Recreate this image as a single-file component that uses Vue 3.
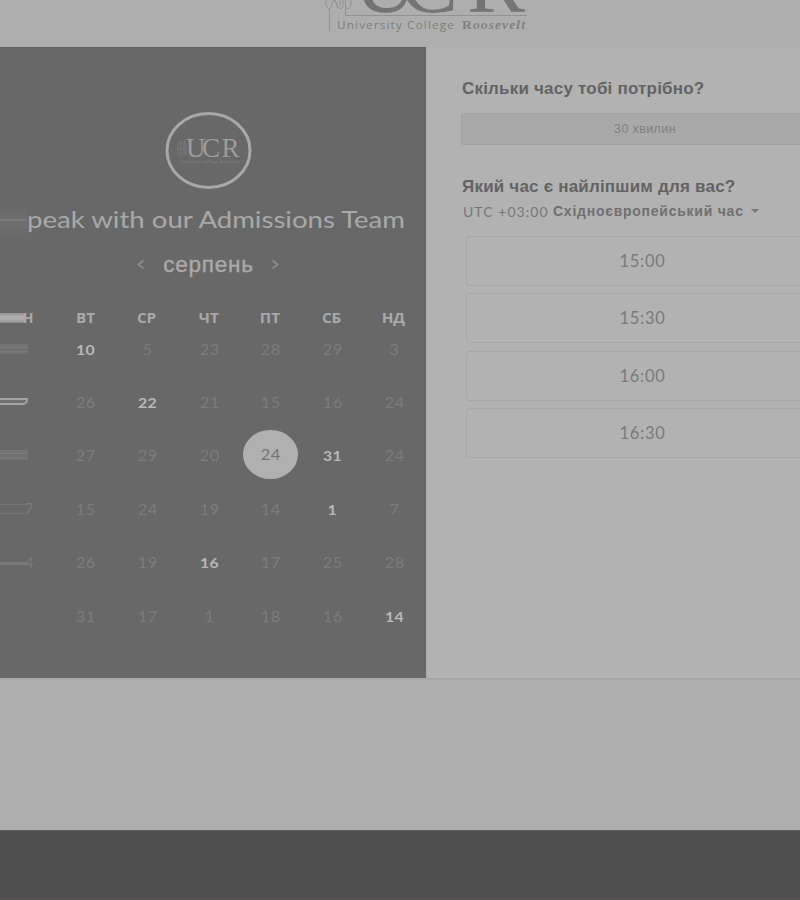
<script setup>
const names = ['ВТ', 'СР', 'ЧТ', 'ПТ', 'СБ', 'НД']
const weeks = [
  { mark: 'double', edge: '', days: [10, 5, 23, 28, 29, 3], open: 0 },
  { mark: 'bright', edge: '', days: [26, 22, 21, 15, 16, 24], open: 1 },
  { mark: 'double', edge: '', days: [27, 29, 20, 24, 31, 24], open: 4, selected: 3 },
  { mark: 'outline', edge: '7', days: [15, 24, 19, 14, 1, 7], open: 4 },
  { mark: 'line', edge: '4', days: [26, 19, 16, 17, 25, 28], open: 2 },
  { mark: 'faint', edge: '', days: [31, 17, 1, 18, 16, 14], open: 5 },
]
const times = ['15:00', '15:30', '16:00', '16:30']
</script>

<template>
  <div class="page">
    <header class="top">
      <svg class="brand" width="210" height="47" viewBox="0 0 210 47">
        <g fill="none" stroke="#929292" stroke-width="1">
          <path d="M9.5 8V31M25.5 0V15.5H207" />
          <path d="M6 0V6L9 9L12 6V2L15 0L18 7L21 9L23 6V0M31 0V6L28 9L26 7M14 0L17 4V8M20 0V5" />
        </g>
        <text class="brand-big" x="34 80 147" y="12">UCR</text>
        <text class="brand-sub" x="17" y="28.5" textLength="118" lengthAdjust="spacingAndGlyphs">University College</text>
        <text class="brand-name" x="142" y="28.5" textLength="64" lengthAdjust="spacingAndGlyphs"><tspan class="cap">R</tspan>oosevelt</text>
      </svg>
    </header>

    <main class="widget">
      <section class="calendar">
        <svg class="seal" width="88" height="80" viewBox="0 0 88 80">
          <ellipse cx="44.5" cy="40.5" rx="41.5" ry="37" fill="none" stroke="#a8a8a8" stroke-width="3" />
          <path d="M14 45V36L17 31V45M20 45V31L22 35V45M14 39H23M17 47V43" fill="none" stroke="#787878" />
          <text class="seal-big" x="22 38 57.5" y="47">UCR</text>
          <text class="seal-sub" x="16" y="52.5" textLength="59">University College Roosevelt</text>
        </svg>

        <div class="title-row">
          <span class="title-mark"></span>
          <svg class="title" width="382" height="34" viewBox="0 0 382 34">
            <text x="0" y="24" textLength="378" lengthAdjust="spacingAndGlyphs">peak with our Admissions Team</text>
          </svg>
        </div>

        <nav class="month">
          <svg width="9" height="12" viewBox="0 0 9 12"><path d="M7.5 1.5L2.5 5.5L7.5 9.5" /></svg>
          <span class="month-name">серпень</span>
          <svg width="9" height="12" viewBox="0 0 9 12"><path d="M1.5 1.5L6.5 5.5L1.5 9.5" /></svg>
        </nav>

        <div class="row names">
          <div class="first"><i class="mark solid"></i><span class="edge">Н</span></div>
          <div v-for="n in names" :key="n" class="cell"><span>{{ n }}</span></div>
        </div>
        <div v-for="(w, i) in weeks" :key="i" class="row week">
          <div class="first">
            <i class="mark" :class="w.mark"></i><span class="edge">{{ w.edge }}</span>
          </div>
          <div
            v-for="(d, j) in w.days"
            :key="j"
            class="cell"
            :class="{ open: w.open === j, selected: w.selected === j }"
          ><div class="day"><span>{{ d }}</span></div></div>
        </div>
      </section>

      <section class="options">
        <h2>Скільки часу тобі потрібно?</h2>
        <div class="duration">30 хвилин</div>
        <h2 class="second">Який час є найліпшим для вас?</h2>
        <div class="zone">
          <span class="utc">UTC +03:00</span>
          <b>Східноєвропейський час</b>
          <svg width="8" height="4" viewBox="0 0 8 4"><path d="M0 0H8L4 4Z" fill="#777" /></svg>
        </div>
        <div class="times">
          <div v-for="t in times" :key="t" class="time">{{ t }}</div>
        </div>
      </section>
    </main>
    <footer class="bottom"></footer>
  </div>
</template>

<style>
body { background: #afafaf; overflow: hidden; }
</style>

<style scoped>
* { box-sizing: border-box; }
.page { width: 800px; height: 900px; overflow: hidden; display: flex; flex-direction: column; background: #afafaf; font-family: "Liberation Sans", sans-serif; }
.top { height: 47px; flex: none; padding-left: 320px; background: #aeaeae; }
.brand { display: block; }
.brand-big { font: 87px "Liberation Serif", serif; fill: #747474; }
.brand-sub { font: 10.5px "Open Sans", sans-serif; letter-spacing: 1px; fill: #7e7e7e; }
.brand-name { font: italic bold 13px "Liberation Serif", serif; letter-spacing: 1px; fill: #828282; }
.cap { font-style: normal; }
.widget { height: 631px; flex: none; display: flex; box-shadow: 0 1px 2px #9f9f9f; }
.calendar { width: 426px; flex: none; background: #686868; overflow: hidden; display: flex; flex-direction: column; border-top: 1px solid #626262; }
.seal { display: block; margin: 62px 0 0 164px; flex: none; }
.seal-big { font: 27px "Liberation Serif", serif; fill: #9c9c9c; }
.seal-sub { font: 4px "Liberation Serif", serif; fill: #888; }
.title-row { display: flex; height: 34px; margin-top: 14px; flex: none; }
.title-mark { width: 27px; height: 28px; margin-top: 5px; background: linear-gradient(#6b6b6b 0 4px, #6d6d6d 4px 10px, #7a7a7a 10px 12px, #6e6e6e 12px 20px, #6a6a6a 20px); }
.title { font: 23.5px Lato, sans-serif; fill: #a9a9a9; }
.month { display: flex; align-items: center; height: 30px; margin: 12px 0 0 136px; flex: none; }
.month path { fill: none; stroke: #959595; stroke-width: 1.5; }
.month-name { width: 126px; text-align: center; font-size: 22.5px; letter-spacing: .8px; color: #a9a9a9; -webkit-text-stroke: .4px #a9a9a9; padding-left: 1px; }
.row { display: grid; grid-template-columns: 55px repeat(6, 61.7px); flex: none; align-items: center; }
.names { height: 20px; margin-top: 28px; color: #a9a9a9; font: bold 13.5px "Open Sans", sans-serif; }
.cell { display: flex; align-items: center; justify-content: center; }
.cell > span, .day span { display: block; transform: scaleX(1.13); }
.names .cell > span { margin-left: -1px; }
.week { height: 53.4px; font: 14.5px Lato, sans-serif; letter-spacing: .3px; color: #7c7c7c; }
.names + .week { margin-top: -6px; }
.cell.open { color: #b8b8b8; font-weight: 700; }
.cell.open .day { font-size: 14px; }
.selected .day { width: 55px; height: 49px; margin: -2px 0 0 -1px; border-radius: 50%; background: #b0b0b0; color: #747474; display: flex; align-items: center; justify-content: center; }
.day { padding-top: 1px; }
.first { display: flex; align-items: center; height: 18px; }
.mark { display: block; width: 28px; height: 10px; flex: none; }
.edge { display: block; margin-left: -3px; }
.names .mark { width: 26px; }
.mark.solid { background: linear-gradient(#959595, #b0b0b0 40%, #a8a8a8 70%, #8b8b8b); }
.mark.double { background: linear-gradient(#737373 0 3px, #7b7b7b 3px 4px, #717171 4px 7px, #797979 7px 8px, #737373 8px); }
.mark.bright { height: 7px; border: 2px solid #a2a2a2; border-left: 0; background: #707070; border-radius: 0 1px 5px 0; margin-top: -2px; }
.mark.outline { border: 1px solid #757575; border-left: 0; border-right: 0; }
.mark.line { height: 3px; background: #797979; margin-top: 3px; }
.mark.faint { border: 1px solid #646464; border-left: 0; }
.options { flex: 1; padding: 32px 0 0 35px; background: #b2b2b2; overflow: hidden; border-left: 1px solid #aaa; }
h2 { margin: 0; height: 20px; font: bold 17px/20px "Liberation Sans", sans-serif; letter-spacing: .2px; color: #636363; white-space: nowrap; }
.duration { width: 368px; height: 32px; margin: 14px 0 0 -1px; border: 1px solid #a3a3a3; border-radius: 2px; background: #a9a9a9; color: #808080; font: 12.5px/31px "Liberation Sans", sans-serif; letter-spacing: .38px; text-align: center; }
.second { margin-top: 32px; }
.zone { display: flex; align-items: center; height: 18px; margin-top: 5px; color: #707070; font-size: 14px; white-space: nowrap; }
.utc { width: 91px; font: 14px Lato, sans-serif; letter-spacing: 1.05px; padding-left: 1px; color: #777; }
.zone b { width: 198px; font-size: 14px; letter-spacing: .75px; }
.times { display: flex; flex-direction: column; gap: 7.4px; margin: 16px 0 0 4px; }
.time { width: 353px; height: 50px; border: 1px solid #a7a7a7; border-radius: 3px; color: #7a7a7a; font: 16.5px/48px Lato, sans-serif; letter-spacing: .75px; text-align: center; }
.bottom { height: 70px; flex: none; margin-top: 152px; background: #4f4f4f; border-top: 1px solid #606060; border-bottom: 1px solid #5b5056; }
</style>
